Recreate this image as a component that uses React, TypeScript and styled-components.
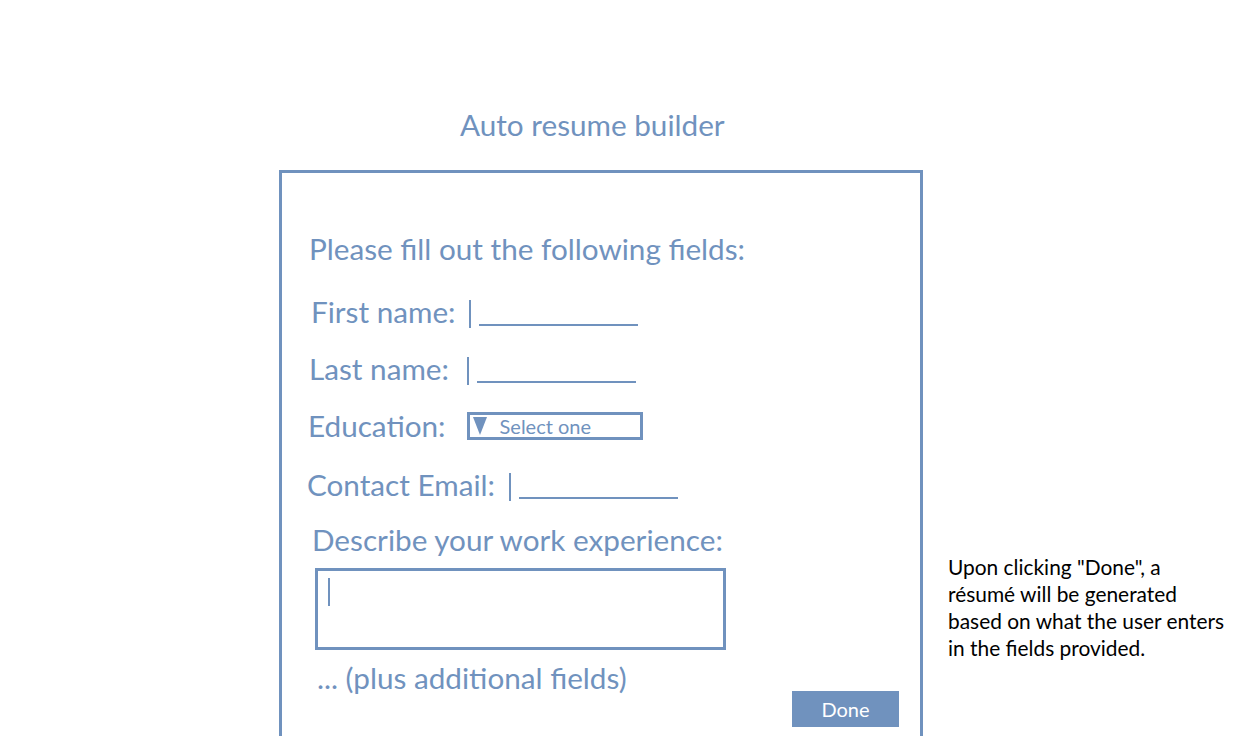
import React from "react";
import styled, { createGlobalStyle } from "styled-components";

const ACCENT = "#7092be";

const Global = createGlobalStyle`
  html, body { margin: 0; padding: 0; background: #ffffff; }
  body { font-family: Lato, "Open Sans", sans-serif; }
`;

const Page = styled.div`
  display: flex;
  align-items: flex-start;
  width: 1244px;
  height: 739px;
  overflow: hidden;
`;

const Main = styled.div`
  flex: 0 0 auto;
  display: flex;
  flex-direction: column;
  margin-left: 279px;
  width: 644px;
`;

const Title = styled.h1`
  margin: 0 0 25px 0;
  padding: 105px 0 0 181px;
  font-size: 29.7px;
  font-weight: 400;
  line-height: 40px;
  color: ${ACCENT};
`;

const Panel = styled.div`
  box-sizing: border-box;
  height: 566px;
  border: 3px solid ${ACCENT};
  border-bottom: none;
  padding: 56px 0 0 0;
  display: flex;
  flex-direction: column;
`;

const Text = styled.div<{ $indent: number; $mt?: number }>`
  margin: ${(p) => p.$mt ?? 0}px 0 0 ${(p) => p.$indent}px;
  font-size: 29.7px;
  line-height: 40px;
  color: ${ACCENT};
  display: flex;
  align-items: center;
  white-space: nowrap;
`;

const Cursor = styled.span<{ $gap: number }>`
  display: inline-block;
  width: 2px;
  height: 28px;
  background: ${ACCENT};
  margin: 4px 8px 0 ${(p) => p.$gap}px;
`;

const Blank = styled.span`
  display: inline-block;
  width: 159px;
  height: 26px;
  border-bottom: 2px solid ${ACCENT};
`;

const Select = styled.div`
  box-sizing: border-box;
  width: 176px;
  height: 28px;
  margin-left: 21px;
  border: 3px solid ${ACCENT};
  display: flex;
  align-items: center;
  gap: 13px;
  padding-left: 3px;
  font-size: 20px;
  color: ${ACCENT};
`;

const TextArea = styled.div`
  box-sizing: border-box;
  width: 411px;
  height: 82px;
  margin: 8px 0 0 33px;
  border: 3px solid ${ACCENT};
  padding: 7px 0 0 10px;
`;

const AreaCursor = styled.span`
  display: block;
  width: 2px;
  height: 28px;
  background: ${ACCENT};
`;

const Footer = styled.div`
  display: flex;
  justify-content: flex-end;
  padding-right: 21px;
  margin-top: -7px;
`;

const Button = styled.button`
  width: 107px;
  height: 36px;
  border: none;
  background: ${ACCENT};
  color: #ffffff;
  font-family: Lato, sans-serif;
  font-size: 20px;
  padding: 0;
`;

const Note = styled.p`
  flex: 0 0 auto;
  margin: 553px 0 0 25px;
  width: 290px;
  font-size: 20.9px;
  line-height: 27px;
  color: #000000;
  white-space: nowrap;
`;

export default function App() {
  return (
    <>
      <Global />
      <Page>
        <Main>
          <Title>Auto resume builder</Title>
          <Panel>
            <Text $indent={27}>Please fill out the following fields:</Text>
            <Text $indent={29} $mt={23}>
              First name:
              <Cursor $gap={13} />
              <Blank />
            </Text>
            <Text $indent={27} $mt={17}>
              Last name:
              <Cursor $gap={18} />
              <Blank />
            </Text>
            <Text $indent={26} $mt={17}>
              Education:
              <Select>
                <svg width="14" height="18" viewBox="0 0 14 18">
                  <polygon points="0,0 14,0 7,18" fill={ACCENT} />
                </svg>
                Select one
              </Select>
            </Text>
            <Text $indent={25} $mt={19}>
              Contact Email:
              <Cursor $gap={14} />
              <Blank />
            </Text>
            <Text $indent={30} $mt={15}>Describe your work experience:</Text>
            <TextArea>
              <AreaCursor />
            </TextArea>
            <Text $indent={35} $mt={8}>... (plus additional fields)</Text>
            <Footer>
              <Button>Done</Button>
            </Footer>
          </Panel>
        </Main>
        <Note>
          Upon clicking "Done", a<br />
          résumé will be generated<br />
          based on what the user enters<br />
          in the fields provided.
        </Note>
      </Page>
    </>
  );
}
